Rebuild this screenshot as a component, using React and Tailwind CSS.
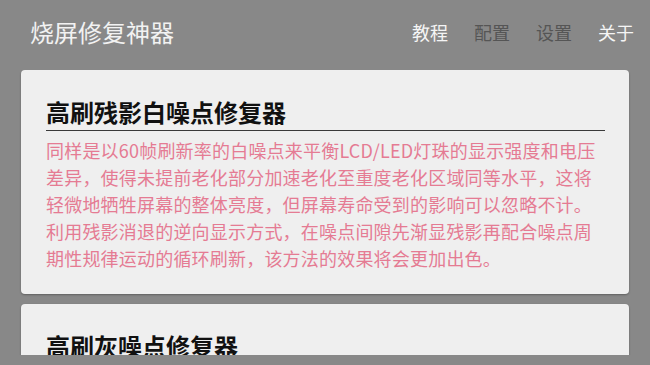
import React from "react";

const lines1 = [
  "同样是以60帧刷新率的白噪点来平衡LCD/LED灯珠的显示强度和电压",
  "差异，使得未提前老化部分加速老化至重度老化区域同等水平，这将",
  "轻微地牺牲屏幕的整体亮度，但屏幕寿命受到的影响可以忽略不计。",
  "利用残影消退的逆向显示方式，在噪点间隙先渐显残影再配合噪点周",
  "期性规律运动的循环刷新，该方法的效果将会更加出色。",
];

function Card({ title, lines }) {
  return (
    <div className="shrink-0 rounded-[4px] bg-[#efefef] shadow-[0_1px_2px_rgba(0,0,0,0.3)] pl-[25px] pr-[24px] pt-[26px] pb-[22px]">
      <div className="border-b border-[#3a3a3a] pb-[2px] text-[24px] leading-[32px] font-bold text-[#111]">
        {title}
      </div>
      <div className="mt-[6px] text-[18px] leading-[27px] tracking-[0.2px] text-[#e57b93]">
        {lines.map((l, i) => (
          <div key={i} className="whitespace-nowrap">{l}</div>
        ))}
      </div>
    </div>
  );
}

export default function App() {
  return (
    <div
      className="w-[650px] h-[365px] bg-[#888888] flex flex-col overflow-hidden"
      style={{ fontFamily: '"Noto Sans CJK SC", "Noto Sans", sans-serif' }}
    >
      <div className="h-[64px] shrink-0 flex items-center justify-between pl-[30px] pr-[16px]">
        <div className="text-[24px] text-[#f2f2f2] leading-none">烧屏修复神器</div>
        <div className="flex items-center gap-[26px] text-[18px] leading-none">
          <span className="text-[#f5f5f5]">教程</span>
          <span className="text-[#555555]">配置</span>
          <span className="text-[#555555]">设置</span>
          <span className="text-[#f5f5f5]">关于</span>
        </div>
      </div>
      <div className="mt-[6px] h-[285px] shrink-0 overflow-hidden px-[21px] flex flex-col gap-[10px]">
        <Card title="高刷残影白噪点修复器" lines={lines1} />
        <Card title="高刷灰噪点修复器" lines={[]} />
      </div>
    </div>
  );
}
